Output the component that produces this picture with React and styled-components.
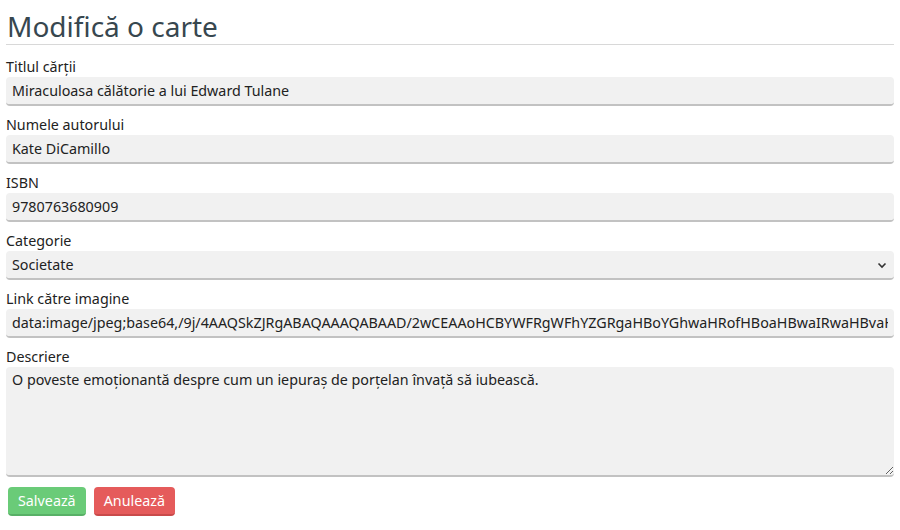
import React from "react";
import styled, { createGlobalStyle } from "styled-components";

const Global = createGlobalStyle`
  html, body { margin: 0; padding: 0; background: #fff; }
  body { font-family: "Noto Sans", "Open Sans", sans-serif; color: #222; }
`;

const Page = styled.div`
  padding: 0 6px 0 6px;
  width: 888px;
`;

const Title = styled.h1`
  margin: 0;
  padding-top: 8px;
  height: 36px;
  font-size: 28px;
  font-weight: 400;
  line-height: 37px;
  color: #37474f;
  padding-left: 1px;
  border-bottom: 1px solid #d8d8d8;
`;

const Form = styled.form`
  display: flex;
  flex-direction: column;
  padding-top: 12px;
`;

const Field = styled.div`
  display: flex;
  flex-direction: column;
  margin-bottom: 9px;
`;

const Label = styled.label`
  font-size: 14.3px;
  line-height: 20px;
  height: 20px;
  color: #222;
`;

const inputBase = `
  box-sizing: border-box;
  width: 100%;
  border: none;
  border-bottom: 2px solid #c2c2c2;
  border-radius: 4px;
  background: #f1f1f1;
  font-family: "Noto Sans", "Open Sans", sans-serif;
  font-size: 14.3px;
  color: #222;
  padding: 0 6px;
  outline: none;
`;

const Input = styled.input`
  ${inputBase}
  height: 29px;
`;

const SelectWrap = styled.div`
  position: relative;
`;

const Select = styled.select`
  ${inputBase}
  height: 29px;
  appearance: none;
  padding-left: 6px;
`;

const Chevron = styled.svg`
  position: absolute;
  right: 7px;
  top: 10px;
  pointer-events: none;
`;

const TextArea = styled.textarea`
  ${inputBase}
  height: 110px;
  padding: 3px 6px;
  line-height: 20px;
  resize: vertical;
  display: block;
`;

const Buttons = styled.div`
  display: flex;
  gap: 8px;
  padding-left: 2px;
  margin-top: 1px;
`;

const Button = styled.button`
  height: 29px;
  padding: 0 10px;
  border: none;
  border-bottom: 2px solid ${(p) => p.$shade};
  border-radius: 4px;
  background: ${(p) => p.$bg};
  color: #fff;
  font-family: "Noto Sans", "Open Sans", sans-serif;
  font-size: 14.3px;
  cursor: pointer;
`;

export default function App() {
  return (
    <Page>
      <Global />
      <Title>Modifică o carte</Title>
      <Form onSubmit={(e) => e.preventDefault()}>
        <Field>
          <Label>Titlul cărții</Label>
          <Input defaultValue="Miraculoasa călătorie a lui Edward Tulane" />
        </Field>
        <Field>
          <Label>Numele autorului</Label>
          <Input defaultValue="Kate DiCamillo" />
        </Field>
        <Field>
          <Label>ISBN</Label>
          <Input defaultValue="9780763680909" />
        </Field>
        <Field>
          <Label>Categorie</Label>
          <SelectWrap>
            <Select defaultValue="Societate">
              <option>Societate</option>
            </Select>
            <Chevron width="10" height="8" viewBox="0 0 10 8">
              <path d="M1.5 2.5 L5 6 L8.5 2.5" fill="none" stroke="#333" strokeWidth="1.6" />
            </Chevron>
          </SelectWrap>
        </Field>
        <Field>
          <Label>Link către imagine</Label>
          <Input defaultValue="data:image/jpeg;base64,/9j/4AAQSkZJRgABAQAAAQABAAD/2wCEAAoHCBYWFRgWFhYZGRgaHBoYGhwaHRofHBoaHBwaIRwaHBvaHBwaHRweHBwaHRwdHR" />
        </Field>
        <Field>
          <Label>Descriere</Label>
          <TextArea defaultValue="O poveste emoționantă despre cum un iepuraș de porțelan învață să iubească." />
        </Field>
        <Buttons>
          <Button type="submit" $bg="#6acb78" $shade="#58b066">Salvează</Button>
          <Button type="button" $bg="#e55b5b" $shade="#c94a4a">Anulează</Button>
        </Buttons>
      </Form>
    </Page>
  );
}
